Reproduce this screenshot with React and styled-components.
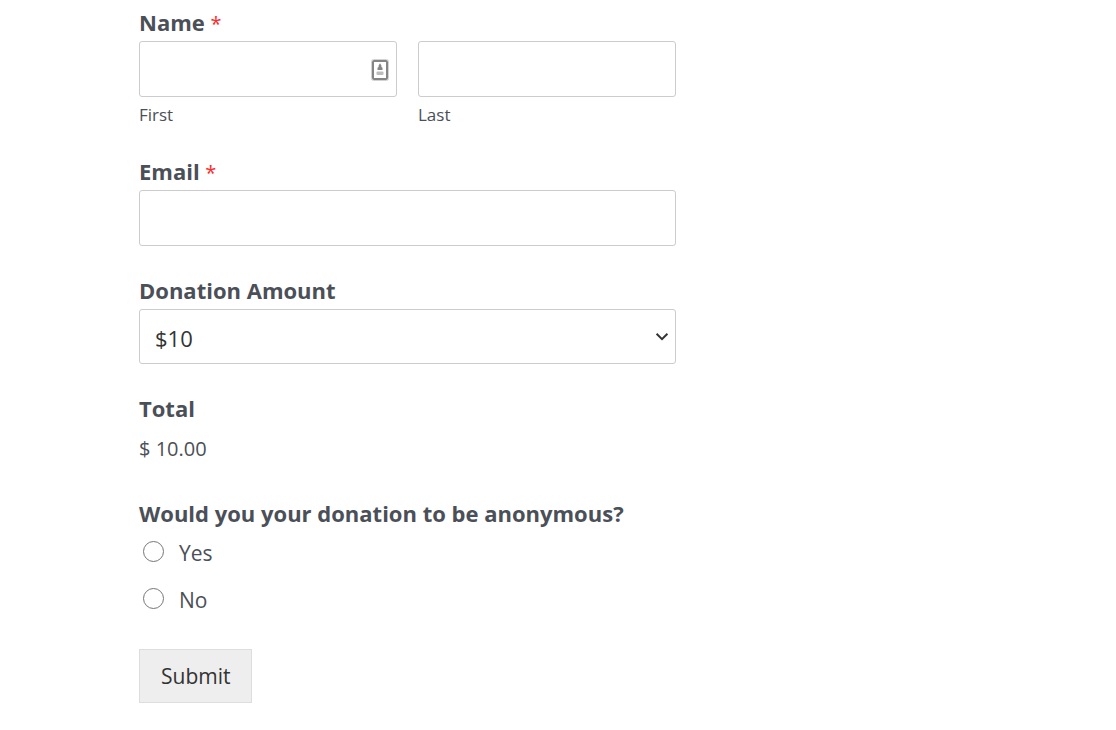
import React, { useState } from "react";
import styled, { createGlobalStyle } from "styled-components";

const amounts = ["10", "20", "50"];

export default function App() {
  const [amount, setAmount] = useState("10");

  return (
    <>
      <GlobalStyle />
      <Page>
        <Form onSubmit={(e) => e.preventDefault()}>
          <Group>
            <Legend>
              Name <Required>*</Required>
            </Legend>
            <NameRow>
              <NameCol>
                <InputWrap>
                  <TextInput id="first" type="text" required />
                  <AutofillIcon />
                </InputWrap>
                <SubLabel htmlFor="first">First</SubLabel>
              </NameCol>
              <NameCol>
                <TextInput id="last" type="text" required />
                <SubLabel htmlFor="last">Last</SubLabel>
              </NameCol>
            </NameRow>
          </Group>

          <Field>
            <Label htmlFor="email">
              Email <Required>*</Required>
            </Label>
            <TextInput id="email" type="email" required />
          </Field>

          <Field>
            <Label htmlFor="amount">Donation Amount</Label>
            <SelectWrap>
              <Select id="amount" value={amount} onChange={(e) => setAmount(e.target.value)}>
                {amounts.map((value) => (
                  <option key={value} value={value}>
                    ${value}
                  </option>
                ))}
              </Select>
              <Chevron viewBox="0 0 14 10" aria-hidden="true">
                <path d="M1.6 1.8 L7 7.2 L12.4 1.8" fill="none" stroke="#333" strokeWidth="2" />
              </Chevron>
            </SelectWrap>
          </Field>

          <Field $loose>
            <Label as="span" id="total">Total</Label>
            <Total aria-labelledby="total">{`$ ${amount}.00`}</Total>
          </Field>

          <Group $loose>
            <Legend>Would you your donation to be anonymous?</Legend>
            <Options>
              <Option>
                <Radio type="radio" name="anonymous" value="yes" />
                Yes
              </Option>
              <Option>
                <Radio type="radio" name="anonymous" value="no" />
                No
              </Option>
            </Options>
          </Group>

          <Submit type="submit">Submit</Submit>
        </Form>
      </Page>
    </>
  );
}

function AutofillIcon() {
  return (
    <IconStyle viewBox="0 0 18 22" aria-hidden="true">
      <rect x="0.5" y="0.5" width="17" height="21" rx="2" fill="none" stroke="#d2d2d2" />
      <rect x="2" y="2" width="14" height="18" rx="1" fill="#fff" stroke="#858585" strokeWidth="2" />
      <path d="M9 4.2 L10.4 6.5 V8 L11.5 8.8 V11 H6.5 V8.8 L7.6 8 V6.5 Z" fill="#858585" />
      <rect x="5.5" y="12.5" width="7" height="3.5" rx="1" fill="#bdbdbd" />
    </IconStyle>
  );
}

const GlobalStyle = createGlobalStyle`
  * {
    box-sizing: border-box;
  }
  body {
    margin: 0;
    background: #fff;
    color: #4b4f58;
    font-family: "Segoe UI", "Open Sans", "Noto Sans", sans-serif;
    font-size: 21px;
    line-height: 30px;
  }
  input,
  select,
  button {
    font: inherit;
  }
`;
const Page = styled.main`
  padding: 7px 24px 27px 139px;
`;
const Form = styled.form`
  max-width: 537px;
`;
const Field = styled.div`
  margin-bottom: ${({ $loose }) => ($loose ? "34px" : "29px")};
`;
const Group = styled.fieldset`
  min-width: 0;
  margin: 0 0 ${({ $loose }) => ($loose ? "34px" : "29px")};
  padding: 0;
  border: 0;
`;
const Label = styled.label`
  display: block;
  margin-bottom: 4px;
  font-size: 22px;
  font-weight: 700;
`;
const Legend = styled.legend`
  margin-bottom: 4px;
  padding: 0;
  font-size: 22px;
  font-weight: 700;
`;
const Required = styled.span`
  color: #ff2a2a;
  font-size: 20px;
  font-weight: 400;
  line-height: 1;
`;
const NameRow = styled.div`
  display: flex;
  gap: 21px;
`;
const NameCol = styled.div`
  flex: 1;
  min-width: 0;
`;
const InputWrap = styled.div`
  position: relative;
`;
const TextInput = styled.input`
  display: block;
  width: 100%;
  height: 56px;
  padding: 0 14px;
  border: 1px solid #ccc;
  border-radius: 3px;
  background: #fff;
  color: #333;
`;
const IconStyle = styled.svg`
  position: absolute;
  top: 18px;
  right: 8px;
  width: 18px;
  height: 22px;
`;
const SubLabel = styled.label`
  display: block;
  margin-top: 6px;
  font-size: 17px;
  line-height: 24px;
`;
const SelectWrap = styled.div`
  position: relative;
`;
const Select = styled.select`
  display: block;
  width: 100%;
  height: 55px;
  padding: 2px 40px 0 15px;
  border: 1px solid #ccc;
  border-radius: 3px;
  background: #fff;
  color: #333;
  font-size: 22px;
  appearance: none;
`;
const Chevron = styled.svg`
  position: absolute;
  top: 23px;
  right: 7px;
  width: 14px;
  height: 10px;
  pointer-events: none;
`;
const Total = styled.output`
  display: block;
  padding-top: 7px;
  font-size: 20px;
`;
const Options = styled.div`
  display: flex;
  flex-direction: column;
  gap: 17px;
  padding-top: 6px;
`;
const Option = styled.label`
  display: flex;
  align-items: center;
  gap: 15px;
  padding-left: 4px;
`;
const Radio = styled.input`
  width: 21px;
  height: 21px;
  margin: 0 0 3px;
  border: 1px solid #767676;
  border-radius: 50%;
  background: #fff;
  appearance: none;
  &:checked {
    border-width: 6px;
  }
`;
const Submit = styled.button`
  height: 54px;
  padding: 0 21px;
  border: 1px solid #ddd;
  background: #eee;
  color: #333;
`;
